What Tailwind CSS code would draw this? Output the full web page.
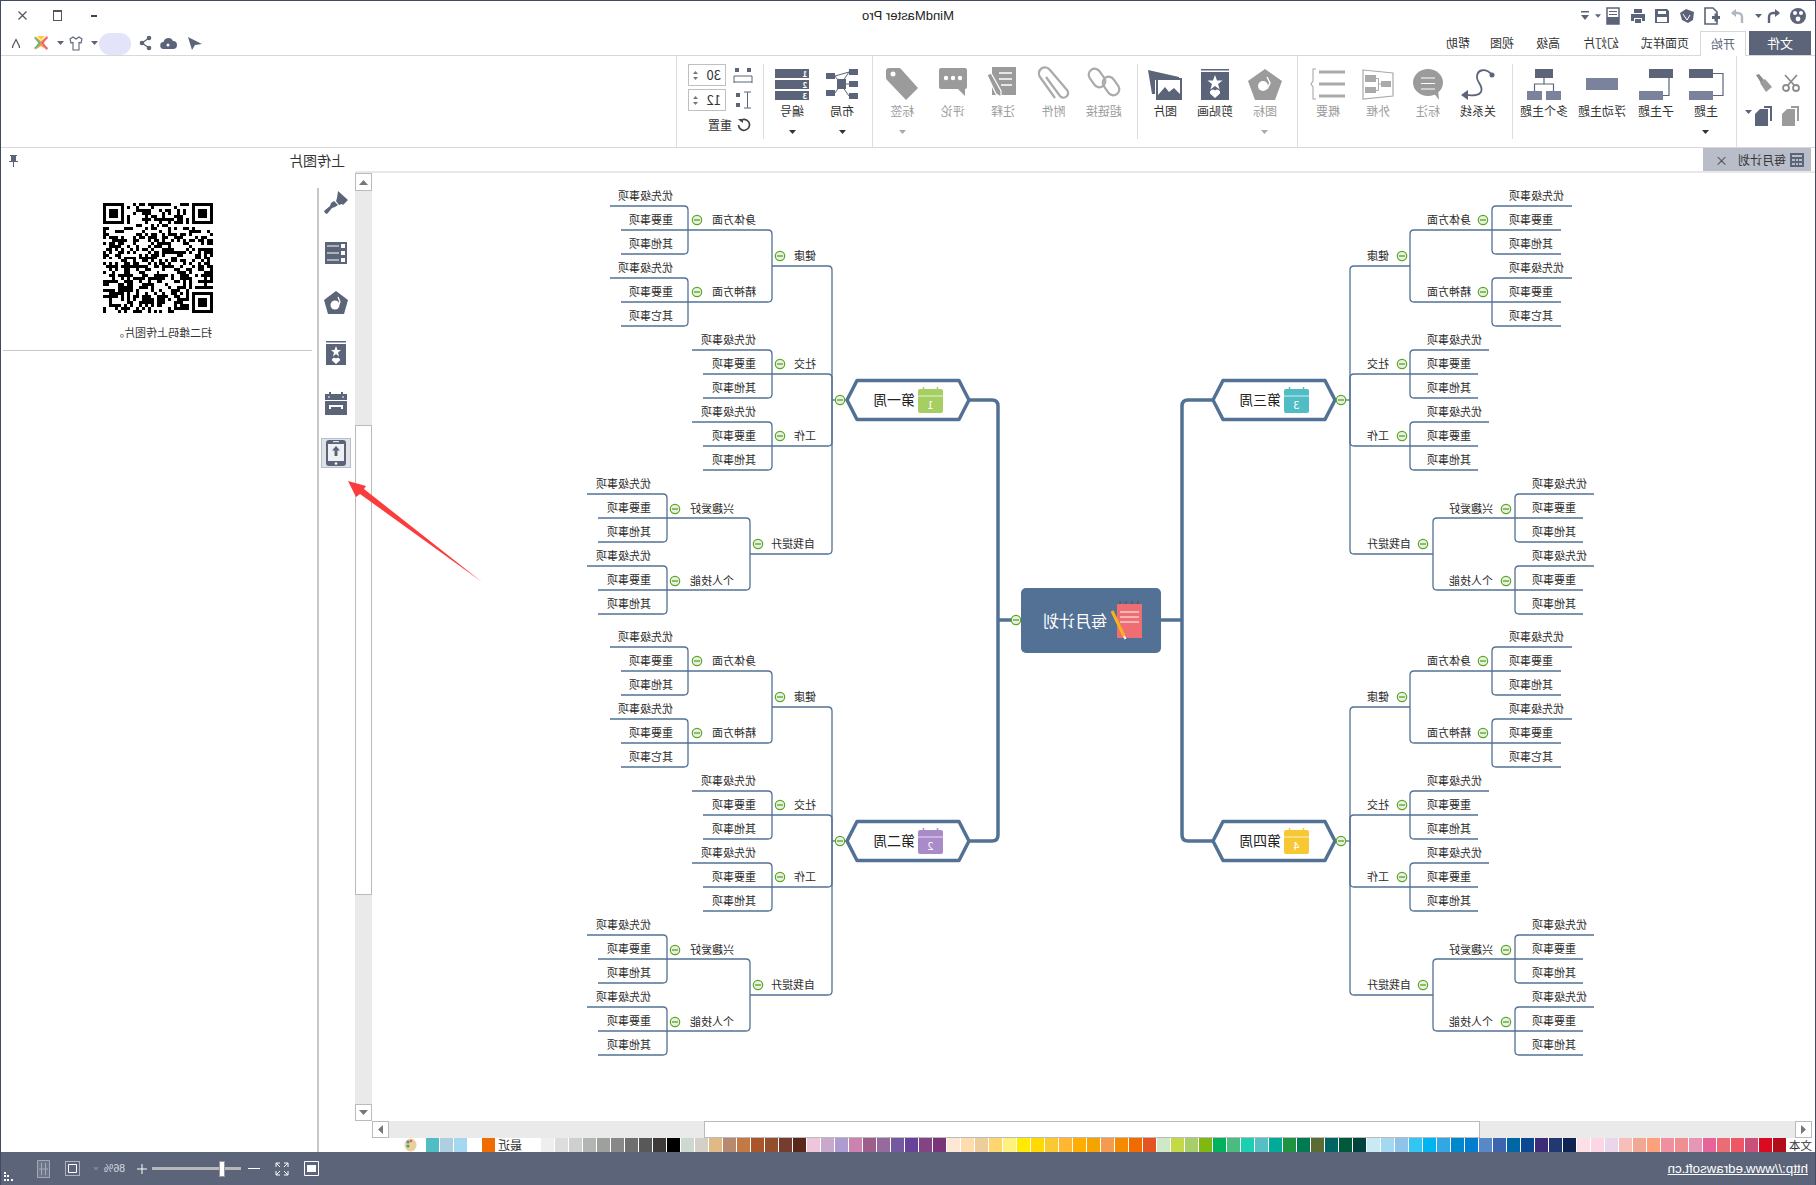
<!DOCTYPE html>
<html lang="zh">
<head>
<meta charset="utf-8">
<title>MindMaster Pro</title>
<script src="https://cdn.jsdelivr.net/npm/@tailwindcss/browser@4"></script>
</head>
<body class="bg-white">
<div class="relative w-[1816px] h-[1185px] overflow-hidden bg-white flex flex-col -scale-x-100 font-['Noto_Sans_CJK_SC',sans-serif] text-[12px] text-[#333]">

  <!-- title bar -->
  <div class="h-[31px] shrink-0 grid grid-cols-[1fr_auto_1fr] items-center">
    <div class="flex items-center pl-[10px]">
      <svg class="w-[16px] h-[16px] -scale-x-100" viewBox="0 0 16 16"><circle cx="8" cy="8" r="8" fill="#5b6478"/><circle cx="5" cy="5" r="2" fill="#fff"/><circle cx="11" cy="5" r="2" fill="#fff"/><circle cx="8" cy="11" r="2.4" fill="#fff"/></svg>
      <svg class="ml-[9px] w-[16px] h-[16px] -scale-x-100" viewBox="0 0 16 16"><path d="M4 15V9a4 4 0 0 1 4-4h6" fill="none" stroke="#5b6478" stroke-width="2.4"/><path d="M10 1l5 4-5 4z" fill="#5b6478"/></svg>
      <svg class="ml-[3px] w-[7px] h-[4px]" viewBox="0 0 7 4"><path d="M0 0h7L3.500 4z" fill="#5b6478"/></svg>
      <svg class="ml-[9px] w-[16px] h-[16px] -scale-x-100" viewBox="0 0 16 16"><path d="M12 15V9a4 4 0 0 0-4-4H2" fill="none" stroke="#b3b6c0" stroke-width="2.400"/><path d="M6 1L1 5l5 4z" fill="#b3b6c0"/></svg>
      <svg class="ml-[9px] w-[18px] h-[18px] -scale-x-100" viewBox="0 0 18 18"><path d="M2 1h8l4 4v12H2z" fill="#fff" stroke="#5b6478" stroke-width="1.600"/><path d="M9 9h8v3H9zM11.500 6.500h3v8h-3z" fill="#5b6478"/></svg>
      <svg class="ml-[8px] w-[16px] h-[16px] -scale-x-100" viewBox="0 0 16 16"><path d="M1 5l6-4 8 3-1 8-5 3-6-3z" fill="#5b6478"/><path d="M4 6l4 6 3-5" stroke="#fff" fill="none"/></svg>
      <svg class="ml-[9px] w-[16px] h-[16px] -scale-x-100" viewBox="0 0 16 16"><path d="M1 1h12l2 2v12H1z" fill="#5b6478"/><path d="M4 3h8v3H4zM3 9h10v5H3z" fill="#fff"/></svg>
      <svg class="ml-[8px] w-[16px] h-[16px] -scale-x-100" viewBox="0 0 16 16"><path d="M4 1h8v4H4zM1 6h14v7h-3v-3H4v3H1zM5 11h6v4H5z" fill="#5b6478"/></svg>
      <svg class="ml-[10px] w-[14px] h-[18px] -scale-x-100" viewBox="0 0 14 18"><path d="M1 1h12v16H1z" fill="#fff" stroke="#5b6478" stroke-width="1.500"/><path d="M1 10h12v7H1zM3 4h8v1H3zM3 7h8v1H3z" fill="#5b6478"/></svg>
      <svg class="ml-[5px] w-[6px] h-[4px]" viewBox="0 0 7 4"><path d="M0 0h7L3.500 4z" fill="#5b6478"/></svg>
      <svg class="ml-[6px] w-[8px] h-[9px]" viewBox="0 0 8 9"><path d="M0 0h8v1.500H0zM0 4h8L4 9z" fill="#5b6478"/></svg>
    </div>
    <div class="font-['Liberation_Sans',sans-serif] text-[13px] text-[#222]">MindMaster Pro</div>
    <div class="flex items-center justify-end pr-[18px]">
      <div class="w-[6px] h-[2px] bg-[#444]"></div>
      <div class="ml-[29px] w-[9px] h-[11px] border border-[#555] border-t-2"></div>
      <svg class="ml-[26px] w-[9px] h-[9px]" viewBox="0 0 9 9"><path d="M0.500 0.500l8 8M8.500 0.500l-8 8" stroke="#555" stroke-width="1.200"/></svg>
    </div>
  </div>

  <!-- ribbon tabs -->
  <div class="h-[24px] shrink-0 flex items-stretch">
    <div class="ml-[5px] w-[62px] bg-[#5b6478] text-white flex items-center justify-center text-[13px]">文件</div>
    <div class="relative z-10 ml-[3px] w-[46px] h-[25px] bg-white border border-b-0 border-[#d8d8d8] flex items-center justify-center text-[#5b6478]">开始</div>
    <div class="w-[70px] flex items-center justify-center">页面样式</div>
    <div class="w-[58px] flex items-center justify-center">幻灯片</div>
    <div class="w-[48px] flex items-center justify-center">高级</div>
    <div class="w-[44px] flex items-center justify-center">视图</div>
    <div class="w-[44px] flex items-center justify-center">帮助</div>
    <div class="ml-auto flex items-center pr-[11px]">
      <svg class="w-[16px] h-[16px] -scale-x-100" viewBox="0 0 16 16"><path d="M1 9L15 2 11 15 8 10z" fill="#5b6478" transform="matrix(-1 0 0 1 16 0)"/></svg>
      <svg class="ml-[10px] w-[17px] h-[13px] -scale-x-100" viewBox="0 0 17 13"><path d="M4 12a3.500 3.500 0 0 1-.5-7A5 5 0 0 1 13 4a4 4 0 0 1 0 8z" fill="#5b6478"/><circle cx="8" cy="8" r="1.500" fill="#fff"/></svg>
      <svg class="ml-[8px] w-[13px] h-[16px] -scale-x-100" viewBox="0 0 13 16"><path d="M10 3L3 8l7 5" fill="none" stroke="#5b6478" stroke-width="1.300"/><circle cx="10" cy="3" r="2.300" fill="#5b6478"/><circle cx="3" cy="8" r="2.300" fill="#5b6478"/><circle cx="10" cy="13" r="2.300" fill="#5b6478"/></svg>
      <div class="ml-[8px] w-[32px] h-[22px] rounded-[11px] bg-[#e3e3fa] mt-[2px]"></div>
      <svg class="ml-[1px] w-[7px] h-[4px]" viewBox="0 0 7 4"><path d="M0 0h7L3.500 4z" fill="#5b6478"/></svg>
      <svg class="ml-[8px] w-[14px] h-[15px] -scale-x-100" viewBox="0 0 14 15"><path d="M4 1L1 3l1 4 2-.5V14h6V6.500L12 7l1-4-3-2-3 2z" fill="#fff" stroke="#5b6478" stroke-width="1.100"/></svg>
      <svg class="ml-[5px] w-[7px] h-[4px]" viewBox="0 0 7 4"><path d="M0 0h7L3.500 4z" fill="#5b6478"/></svg>
      <svg class="ml-[8px] w-[16px] h-[16px] -scale-x-100" viewBox="0 0 16 16"><path d="M2 1l6 5 6-5-3 7 3 7-6-4-6 4 3-7z" fill="#f4a13a"/><path d="M1 3l5 5-5 5 1 1 6-6-6-6z" fill="#52b788"/><path d="M15 3l-5 5 5 5-1 2-6-7 6-7z" fill="#f0607a"/><path d="M4 1h8L8 5z" fill="#ffcf33"/></svg>
      <svg class="ml-[12px] w-[10px] h-[10px] -scale-x-100" viewBox="0 0 10 10"><path d="M1.500 8.500L5 1.500l3.500 7a3.500 3.500 0 0 1-7 0z" fill="none" stroke="#555" stroke-width="1.200"/></svg>
    </div>
  </div>

  <!-- ribbon -->
  <div class="h-[93px] shrink-0 border-y border-[#d8d8d8] flex items-stretch text-center">
    <!-- clipboard -->
    <div class="relative w-[80px] shrink-0 border-r border-[#dddddd] grid grid-cols-[27px_27px] auto-rows-[20px] gap-y-[13px] pl-[15px] pt-[17px]">
      <svg class="w-[20px] h-[20px] -scale-x-100" viewBox="0 0 20 20"><path d="M16 2L7 12M4 2l9 10" stroke="#8c8c8c" stroke-width="1.800"/><circle cx="5" cy="15" r="3" fill="none" stroke="#8c8c8c" stroke-width="1.800"/><circle cx="15" cy="15" r="3" fill="none" stroke="#8c8c8c" stroke-width="1.800"/></svg>
      <svg class="w-[20px] h-[20px] -scale-x-100" viewBox="0 0 20 20"><path d="M2 2l3-1 5 6-3 3z" fill="#8c8c8c"/><path d="M6 10l5-4 7 8-6 5z" fill="#9b9b9b"/></svg>
      <svg class="w-[20px] h-[20px] -scale-x-100" viewBox="0 0 20 20"><path d="M10 0h8v15h-2V2h-6z" fill="#9b9b9b"/><path d="M6 3h8v17H1V8z" fill="#9b9b9b"/></svg>
      <svg class="w-[20px] h-[20px] -scale-x-100" viewBox="0 0 20 20"><path d="M10 0h8v15h-2V2h-6z" fill="#5b6478"/><path d="M6 3h8v17H1V8z" fill="#5b6478"/></svg>
      <svg class="absolute left-[64px] top-[54px] w-[7px] h-[4px]" viewBox="0 0 7 4"><path d="M0 0h7L3.500 4z" fill="#5b6478"/></svg>
    </div>

    <div class="flex pl-[5px]">
      <div class="w-[50px] shrink-0 flex flex-col items-center pt-[8px]">
        <svg class="w-[44px] h-[36px] -scale-x-100" viewBox="0 0 44 36"><path d="M5 5h24v9H5z" fill="#5b6478"/><path d="M5 27h24v9H5z" fill="#7b829c"/><path d="M29 9.500h10v22H29" fill="none" stroke="#5b6478" stroke-width="1.200"/></svg>
        <div class="mt-[3px] leading-[16px]">主题</div>
        <svg class="mt-[11px] w-[7px] h-[4px]" viewBox="0 0 7 4"><path d="M0 0h7L3.500 4z" fill="#333"/></svg>
      </div>
      <div class="w-[50px] shrink-0 flex flex-col items-center pt-[8px]">
        <svg class="w-[44px] h-[36px] -scale-x-100" viewBox="0 0 44 36"><path d="M15 5h24v9H15z" fill="#5b6478"/><path d="M5 27h24v9H5z" fill="#7b829c"/><path d="M35 14v17.500h-6" fill="none" stroke="#5b6478" stroke-width="1.200"/></svg>
        <div class="mt-[3px] leading-[16px]">子主题</div>
      </div>
      <div class="w-[58px] shrink-0 flex flex-col items-center pt-[8px]">
        <svg class="w-[44px] h-[36px] -scale-x-100" viewBox="0 0 44 36"><path d="M6 14h32v12H6z" fill="#7b829c"/></svg>
        <div class="mt-[3px] leading-[16px]">浮动主题</div>
      </div>
      <div class="w-[58px] shrink-0 flex flex-col items-center pt-[8px]">
        <svg class="w-[44px] h-[36px] -scale-x-100" viewBox="0 0 44 36"><path d="M13 5h18v9H13z" fill="#5b6478"/><path d="M5 27h15v9H5zM24 27h15v9H24z" fill="#7b829c"/><path d="M22 14v6M12.500 27v-7h19v7" fill="none" stroke="#5b6478" stroke-width="1.200"/></svg>
        <div class="mt-[3px] leading-[16px]">多个主题</div>
      </div>
    </div>
    <div class="ml-[2px] w-px h-[75px] mt-[8px] bg-[#dddddd]"></div>

    <div class="flex ml-[9px]">
      <div class="w-[50px] shrink-0 flex flex-col items-center pt-[8px]">
        <svg class="w-[44px] h-[36px] -scale-x-100" viewBox="0 0 44 36"><circle cx="36" cy="11" r="2.500" fill="#5b6478"/><path d="M36 11C30 4 22 5 21 12c-1 6 7 10 4 16-3 5-11 3-16 3" fill="none" stroke="#5b6478" stroke-width="1.800"/><path d="M5 31l7-5v10z" fill="#5b6478"/></svg>
        <div class="mt-[3px] leading-[16px]">关系线</div>
      </div>
      <div class="w-[50px] shrink-0 flex flex-col items-center pt-[8px] text-[#9b9b9b]">
        <svg class="w-[44px] h-[36px] -scale-x-100" viewBox="0 0 44 36"><ellipse cx="22" cy="18.500" rx="15" ry="13.500" fill="#9b9b9b"/><path d="M27 28l6 8-1-10z" fill="#9b9b9b"/><path d="M15 14h14M15 19.500h14M15 25h14" stroke="#fff" stroke-width="1.200"/></svg>
        <div class="mt-[3px] leading-[16px]">标注</div>
      </div>
      <div class="w-[50px] shrink-0 flex flex-col items-center pt-[8px] text-[#9b9b9b]">
        <svg class="w-[44px] h-[36px] -scale-x-100" viewBox="0 0 44 36"><path d="M7 6l30 3v23L7 35z" fill="#fff" stroke="#aaa" stroke-width="1.200"/><path d="M9 11h11v7H9zM9 23h11v6H9zM25 17h10v6H25z" fill="#aaa"/><path d="M20 14.500h2.500v12H20M22.500 20H25" fill="none" stroke="#aaa"/></svg>
        <div class="mt-[3px] leading-[16px]">外框</div>
      </div>
      <div class="w-[50px] shrink-0 flex flex-col items-center pt-[8px] text-[#9b9b9b]">
        <svg class="w-[44px] h-[36px] -scale-x-100" viewBox="0 0 44 36"><path d="M13 6.500h26v3H13zM13 18.500h26v3H13zM13 30.500h26v3H13z" fill="#aaa"/><path d="M10 5H7v12l-2 3 2 3v12h3" fill="none" stroke="#aaa" stroke-width="1.100"/></svg>
        <div class="mt-[3px] leading-[16px]">概要</div>
      </div>
    </div>
    <div class="ml-[5px] w-px bg-[#dddddd]"></div>

    <div class="flex ml-[7px]">
      <div class="w-[50px] shrink-0 flex flex-col items-center pt-[8px] text-[#9b9b9b]">
        <svg class="w-[44px] h-[36px] -scale-x-100" viewBox="0 0 44 36"><path d="M22 5l17 12-7 19H12L5 17z" fill="#9b9b9b"/><circle cx="20" cy="22" r="5" fill="#fff"/><path d="M24 13l3 6-3 6" fill="none" stroke="#fff" stroke-width="1.500"/></svg>
        <div class="mt-[3px] leading-[16px]">图标</div>
        <svg class="mt-[11px] w-[7px] h-[4px]" viewBox="0 0 7 4"><path d="M0 0h7L3.500 4z" fill="#aaa"/></svg>
      </div>
      <div class="w-[50px] shrink-0 flex flex-col items-center pt-[8px]">
        <svg class="w-[44px] h-[36px] -scale-x-100" viewBox="0 0 44 36"><path d="M8 5h28v1.500H8zM8 8h28v28H8z" fill="#5b6478"/><path d="M22 11l2 5.500h5.500L25 20l1.700 5.500L22 22l-4.700 3.500L19 20l-4.500-3.500H20z" fill="#fff"/><path d="M22 34l-5-4.500a3 3 0 0 1 5-3 3 3 0 0 1 5 3z" fill="#fff"/></svg>
        <div class="mt-[3px] leading-[16px]">剪贴画</div>
      </div>
      <div class="w-[50px] shrink-0 flex flex-col items-center pt-[8px]">
        <svg class="w-[44px] h-[36px] -scale-x-100" viewBox="0 0 44 36"><path d="M5 6l31 7v3H12v14H9z" fill="#5b6478"/><path d="M13 14h26v22H13z" fill="#5b6478"/><path d="M15 16h22v14l-6-6-5 4-4-5-7 8z" fill="#fff"/></svg>
        <div class="mt-[3px] leading-[16px]">图片</div>
      </div>
    </div>
    <div class="ml-[2px] w-px h-[75px] mt-[8px] bg-[#dddddd]"></div>

    <div class="flex ml-[8px] text-[#9b9b9b]">
      <div class="w-[50.400px] shrink-0 flex flex-col items-center pt-[8px]">
        <svg class="w-[44px] h-[36px] -scale-x-100" viewBox="0 0 44 36"><rect x="9" y="4" width="12" height="20" rx="6" transform="rotate(-35 15 14)" fill="none" stroke="#aaa" stroke-width="2.200"/><rect x="23" y="12" width="12" height="20" rx="6" transform="rotate(-35 29 22)" fill="none" stroke="#aaa" stroke-width="2.200"/></svg>
        <div class="mt-[3px] leading-[16px]">超链接</div>
      </div>
      <div class="w-[50.400px] shrink-0 flex flex-col items-center pt-[8px]">
        <svg class="w-[44px] h-[36px] -scale-x-100" viewBox="0 0 44 36"><path d="M18 13l14 19a4.500 4.500 0 0 0 7-6L22 6a6 6 0 0 0-10 7l15 21" fill="none" stroke="#aaa" stroke-width="2.200" transform="translate(-3 0)"/></svg>
        <div class="mt-[3px] leading-[16px]">附件</div>
      </div>
      <div class="w-[50.400px] shrink-0 flex flex-col items-center pt-[8px]">
        <svg class="w-[44px] h-[36px] -scale-x-100" viewBox="0 0 44 36"><path d="M11 3h24v28H11z" fill="#9b9b9b"/><path d="M18 9h13M18 15h13M20 21h11" stroke="#fff" stroke-width="1.500"/><path d="M6 11l4-2 10 18 0 6-5-3z" fill="#9b9b9b" stroke="#fff" stroke-width="1.200"/></svg>
        <div class="mt-[3px] leading-[16px]">注释</div>
      </div>
      <div class="w-[50.400px] shrink-0 flex flex-col items-center pt-[8px]">
        <svg class="w-[44px] h-[36px] -scale-x-100" viewBox="0 0 44 36"><path d="M10 4h24a2 2 0 0 1 2 2v17a2 2 0 0 1-2 2v7l-7-7H10a2 2 0 0 1-2-2V6a2 2 0 0 1 2-2z" fill="#9b9b9b"/><circle cx="15" cy="14" r="2.200" fill="#fff"/><circle cx="22" cy="14" r="2.200" fill="#fff"/><circle cx="29" cy="14" r="2.200" fill="#fff"/></svg>
        <div class="mt-[3px] leading-[16px]">评论</div>
      </div>
      <div class="w-[50.400px] shrink-0 flex flex-col items-center pt-[8px]">
        <svg class="w-[44px] h-[36px] -scale-x-100" viewBox="0 0 44 36"><path d="M9 4h10a3 3 0 0 1 2 1l17 19-12 12L7 16a3 3 0 0 1-1-2V7a3 3 0 0 1 3-3z" fill="#9b9b9b"/><circle cx="13" cy="10" r="2.500" fill="#fff"/></svg>
        <div class="mt-[3px] leading-[16px]">标签</div>
        <svg class="mt-[11px] w-[7px] h-[4px]" viewBox="0 0 7 4"><path d="M0 0h7L3.500 4z" fill="#aaa"/></svg>
      </div>
    </div>
    <div class="ml-[4px] w-px bg-[#dddddd]"></div>

    <div class="flex ml-[5px]">
      <div class="w-[50px] shrink-0 flex flex-col items-center pt-[8px]">
        <svg class="w-[44px] h-[36px] -scale-x-100" viewBox="0 0 44 36"><path d="M17 15h9v10h-9zM6 9h9v6H6zM6 26h9v6H6zM29 5h9v6h-9zM29 17h9v6h-9zM29 29h9v6h-9z" fill="#5b6478"/><path d="M15 12l14-4M15 12l14 20M15 29L29 8M26 20h3" stroke="#5b6478" stroke-width="1"/></svg>
        <div class="mt-[3px] leading-[16px]">布局</div>
        <svg class="mt-[11px] w-[7px] h-[4px]" viewBox="0 0 7 4"><path d="M0 0h7L3.500 4z" fill="#333"/></svg>
      </div>
      <div class="w-[50px] shrink-0 flex flex-col items-center pt-[8px]">
        <svg class="w-[44px] h-[36px] -scale-x-100" viewBox="0 0 44 36"><path d="M5 5h34v9H5zM5 16h34v9H5zM5 27h34v9H5z" fill="#5b6478"/><g fill="#fff" font-size="8" font-weight="700" text-anchor="middle"><text transform="translate(35 12.500) scale(-1 1)">1</text><text transform="translate(35 23.500) scale(-1 1)">2</text><text transform="translate(35 34.500) scale(-1 1)">3</text></g></svg>
        <div class="mt-[3px] leading-[16px]">编号</div>
        <svg class="mt-[11px] w-[7px] h-[4px]" viewBox="0 0 7 4"><path d="M0 0h7L3.500 4z" fill="#333"/></svg>
      </div>
    </div>
    <div class="ml-[3px] w-px h-[75px] mt-[8px] bg-[#dddddd]"></div>

    <!-- spacing -->
    <div class="w-[86px] shrink-0 pt-[8px] pl-[7px]">
      <div class="flex items-center h-[22px]">
        <svg class="w-[26px] h-[22px] -scale-x-100" viewBox="0 0 26 22"><path d="M5 4h4v4H5zM17 4h4v4h-4z" fill="#5b6478"/><path d="M4 12h18M4 12v7M22 12v7M4 18h18" fill="none" stroke="#5b6478"/></svg>
        <div class="ml-[4px] w-[38px] h-[22px] border border-[#c0c0c0] flex items-center justify-between px-[4px] text-[13px]"><span>30</span><span class="flex flex-col gap-[3px]"><svg class="w-[5px] h-[3px]" viewBox="0 0 5 3"><path d="M0 3h5L2.500 0z" fill="#777"/></svg><svg class="w-[5px] h-[3px]" viewBox="0 0 5 3"><path d="M0 0h5L2.500 3z" fill="#777"/></svg></span></div>
      </div>
      <div class="flex items-center h-[22px] mt-[3px]">
        <svg class="w-[26px] h-[22px] -scale-x-100" viewBox="0 0 26 22"><path d="M6 4h4v4H6zM6 14h4v4H6z" fill="#5b6478"/><path d="M14 3h7M17.500 3v16M14 19h7" fill="none" stroke="#5b6478"/></svg>
        <div class="ml-[4px] w-[38px] h-[22px] border border-[#c0c0c0] flex items-center justify-between px-[4px] text-[13px]"><span>12</span><span class="flex flex-col gap-[3px]"><svg class="w-[5px] h-[3px]" viewBox="0 0 5 3"><path d="M0 3h5L2.500 0z" fill="#777"/></svg><svg class="w-[5px] h-[3px]" viewBox="0 0 5 3"><path d="M0 0h5L2.500 3z" fill="#777"/></svg></span></div>
      </div>
      <div class="flex items-center h-[16px] mt-[6px] ml-[5px] gap-[5px]">
        <svg class="w-[14px] h-[14px] -scale-x-100" viewBox="0 0 14 14"><path d="M3 3a5.500 5.500 0 1 1-1.500 4" fill="none" stroke="#444" stroke-width="1.700"/><path d="M1 1h5v4z" fill="#444" transform="translate(0 0)"/></svg>
        <span>重置</span>
      </div>
    </div>
    <div class="w-px bg-[#dddddd]"></div>
  </div>

  <!-- main -->
  <div class="h-[1004px] shrink-0 flex">
    <!-- document side -->
    <div class="w-[1461px] shrink-0 flex flex-col">
      <div class="h-[25px] shrink-0 border-b-2 border-[#e8e8e8] flex">
        <div class="ml-[5px] w-[108px] h-[23px] bg-[#b9bdc9] flex items-center pl-[6px] gap-[3px]">
          <svg class="w-[16px] h-[16px] shrink-0 -scale-x-100" viewBox="0 0 16 16"><path d="M1 1h14v14H1z" fill="#5b6478"/><path d="M3 3h10v2H3zM3 7h3v2H3zM7 7h2v2H7zM10 7h3v2h-3zM3 11h3v2H3zM7 11h2v2H7zM10 11h3v2h-3z" fill="#b9bdc9"/></svg>
          <span class="text-[12px] text-[#333] w-[48px] shrink-0 whitespace-nowrap">每月计划</span>
          <span class="ml-[7px] text-[13px] leading-none text-[#444]">×</span>
        </div>
      </div>
      <div class="h-[948px] shrink-0 flex">
        <div class="w-[1444px] shrink-0 relative">
          <svg id="map" class="block" width="1444" height="948" viewBox="0 173 1444 948"></svg>
        </div>
        <!-- vertical scrollbar -->
        <div class="w-[17px] shrink-0 flex flex-col bg-[#eaeaea]">
          <div class="h-[18px] bg-white border border-[#bbbbbb] flex items-center justify-center"><svg class="w-[9px] h-[5px]" viewBox="0 0 9 5"><path d="M0 5h9L4.500 0z" fill="#777"/></svg></div>
          <div class="h-[234px]"></div>
          <div class="h-[470px] bg-white border-x border-t border-b border-[#bbbbbb]"></div>
          <div class="flex-1"></div>
          <div class="h-[17px] bg-white border border-[#bbbbbb] flex items-center justify-center"><svg class="w-[9px] h-[5px]" viewBox="0 0 9 5"><path d="M0 0h9L4.500 5z" fill="#777"/></svg></div>
        </div>
      </div>
      <!-- horizontal scrollbar -->
      <div class="h-[17px] w-[1444px] shrink-0 flex pl-[4px]">
        <div class="w-[17px] bg-white border border-[#bbbbbb] flex items-center justify-center"><svg class="w-[5px] h-[9px]" viewBox="0 0 5 9"><path d="M5 0v9L0 4.500z" fill="#777"/></svg></div>
        <div class="w-[315px] bg-[#eaeaea]"></div>
        <div class="w-[776px] bg-white border border-[#bbbbbb]"></div>
        <div class="flex-1 bg-[#eaeaea]"></div>
        <div class="w-[17px] bg-white border border-[#bbbbbb] flex items-center justify-center"><svg class="w-[5px] h-[9px]" viewBox="0 0 5 9"><path d="M0 0v9L5 4.500z" fill="#777"/></svg></div>
      </div>
      <!-- colour strip -->
      <div class="h-[14px] shrink-0 flex items-stretch leading-[14px] text-[11.500px]">
        <div class="w-[30px] pl-[4px] whitespace-nowrap">文本</div>
        <div id="sw" class="flex"></div>
        <div class="ml-[18px] w-[27px] whitespace-nowrap text-[12px]">最近</div>
        <div class="w-[13px] bg-[#f06c00]"></div>
        <div class="w-[15px]"></div>
        <div class="w-[13px] mr-px bg-[#a3d8f0]"></div>
        <div class="w-[13px] mr-px bg-[#aecfe0]"></div>
        <div class="w-[13px] bg-[#4fbdc3]"></div>
        <svg class="ml-[9px] w-[13px] h-[14px] -scale-x-100" viewBox="0 0 13 14"><ellipse cx="6.500" cy="7" rx="6" ry="6.500" fill="#e9cf9a"/><circle cx="4" cy="4" r="1.500" fill="#4a86c8"/><circle cx="4" cy="8" r="1.500" fill="#3fa66b"/><circle cx="7" cy="3" r="1.300" fill="#e0624a"/></svg>
      </div>
    </div>

    <!-- side panel -->
    <div class="w-[355px] shrink-0 flex flex-col">
      <div class="h-[25px] shrink-0 flex items-center pl-[10px] pr-[9px] justify-between">
        <span class="text-[14px] text-[#333]">上传图片</span>
        <svg class="w-[9px] h-[12px] -scale-x-100" viewBox="0 0 9 12"><path d="M1 0h7v1H7v5h2v1H5v5H4V7H0V6h2V1H1z" fill="#5b6478"/></svg>
      </div>
      <div class="flex-1 flex">
        <div class="w-[36px] shrink-0 pt-[5px] pl-[2px] flex flex-col">
          <div class="h-[50px] flex items-center justify-center"><svg class="w-[26px] h-[26px] -scale-x-100" viewBox="0 0 26 26"><path d="M15 1l10 9-5 5-1-1-3 1-3-4 1-3z" fill="#5b6478"/><path d="M11 11l4 4-3 2-3 1-5 6-2-1-1-2 6-5 1-3z" fill="#5b6478"/></svg></div>
          <div class="h-[50px] flex items-center justify-center"><svg class="w-[22px] h-[22px] -scale-x-100" viewBox="0 0 22 22"><path d="M0 0h22v22H0z" fill="#5b6478"/><path d="M2 4h12M2 11h12M2 18h12" stroke="#fff"/><path d="M16 2h4v4h-4zM16 9h4v4h-4zM16 16h4v4h-4z" fill="#fff"/></svg></div>
          <div class="h-[50px] flex items-center justify-center"><svg class="w-[24px] h-[24px] -scale-x-100" viewBox="0 0 24 24"><path d="M12 0l12 9-4 14H4L0 9z" fill="#5b6478"/><circle cx="11" cy="14" r="4.500" fill="#fff"/><path d="M14 6l2 5-2 4" fill="none" stroke="#fff" stroke-width="1.300"/></svg></div>
          <div class="h-[50px] flex items-center justify-center"><svg class="w-[20px] h-[24px] -scale-x-100" viewBox="0 0 20 24"><path d="M0 0h20v1.500H0zM0 3h20v21H0z" fill="#5b6478"/><path d="M10 5l1.500 4H15l-3 2.500 1 4-3-2.500-3 2.500 1-4-3-2.500h3.500z" fill="#fff"/><path d="M10 23l-4-3.500a2.300 2.300 0 0 1 4-2 2.300 2.300 0 0 1 4 2z" fill="#fff"/></svg></div>
          <div class="h-[50px] flex items-center justify-center"><svg class="w-[22px] h-[23px] -scale-x-100" viewBox="0 0 22 23"><path d="M4 0h2v2h10V0h2v2h4v21H0V2h4z" fill="#5b6478"/><path d="M3 5h2M17 5h2M0 8.500h22" stroke="#fff" fill="none"/><path d="M4 13h14v4h-2v-2H6v2H4z" fill="#fff"/></svg></div>
          <div class="h-[50px] flex items-center justify-center"><div class="w-[30px] h-[30px] bg-[#e0e2e8] border border-[#b9bdc9] flex items-center justify-center"><svg class="w-[20px] h-[26px] -scale-x-100" viewBox="0 0 20 26"><rect width="20" height="26" rx="3" fill="#5b6478"/><rect x="2" y="4" width="16" height="17" fill="#eef0f4"/><path d="M7 1.700h6" stroke="#fff"/><circle cx="10" cy="23.500" r="1.300" fill="#fff"/><path d="M10 6l4 4.500h-2.500V16h-3v-5.500H6z" fill="#5b6478"/></svg></div></div>
        </div>
        <div class="w-[2px] mt-[15px] bg-[#c8c8c8] shrink-0"></div>
        <div class="flex-1 pt-[30px]">
          <svg id="qr" class="ml-[104px] w-[110px] h-[110px] -scale-x-100" viewBox="0 0 37 37" shape-rendering="crispEdges"></svg>
          <div class="ml-[105px] mt-[11px] leading-[16px] text-[11px] text-[#333] whitespace-nowrap">扫二维码上传图片。</div>
          <div class="ml-[5px] mt-[10px] w-[309px] h-[1px] bg-[#c8c8c8]"></div>
        </div>
      </div>
    </div>
  </div>

  <!-- status bar -->
  <div class="h-[33px] shrink-0 bg-[#5b6478] flex items-center text-white">
    <a class="ml-[8px] underline font-['Liberation_Sans',sans-serif] text-[13.300px]">http://www.edrawsoft.cn</a>
    <div class="ml-auto pr-[4px] flex items-center">
      <svg class="w-[15px] h-[15px]" viewBox="0 0 15 15"><path d="M0.500 0.500h14v14H0.500z" fill="none" stroke="#fff"/><path d="M3 4h9v7H3z" fill="#fff"/></svg>
      <svg class="ml-[15px] w-[14px] h-[14px]" viewBox="0 0 14 14"><path d="M1 5V1h4M13 5V1H9M1 9v4h4M13 9v4H9M1 1l4 4M13 1L9 5M1 13l4-4M13 13L9 9" fill="none" stroke="#fff"/></svg>
      <div class="ml-[15px] w-[12px] h-px bg-white"></div>
      <div class="ml-[7px] relative w-[89px] h-[3px] bg-[#b8b8b8]"><div class="absolute left-[16px] -top-[6px] w-[6px] h-[16px] bg-white border border-[#999]"></div></div>
      <svg class="ml-[5px] w-[10px] h-[10px]" viewBox="0 0 10 10"><path d="M0 5h10M5 0v10" stroke="#fff"/></svg>
      <span class="ml-[12px] w-[18px] text-[10.500px] text-[#d8dbe2] font-['Liberation_Sans',sans-serif]">86%</span>
      <svg class="ml-[8px] w-[6px] h-[4px]" viewBox="0 0 7 4"><path d="M0 0h7L3.500 4z" fill="#7d8498"/></svg>
      <svg class="ml-[13px] w-[15px] h-[15px]" viewBox="0 0 15 15"><path d="M0.500 0.500h14v14H0.500z" fill="none" stroke="#fff" stroke-dasharray="1 1"/><path d="M3.500 3.500h8v8h-8z" fill="none" stroke="#fff"/></svg>
      <svg class="ml-[15px] w-[13px] h-[18px]" viewBox="0 0 13 18"><path d="M0.500 0.500h12v17H0.500z" fill="#6f7689" stroke="#a4a9b6"/><path d="M4.500 3v12M8.500 3v12M2 9h9" stroke="#a4a9b6"/></svg>
      <svg class="ml-[24px] w-[9px] h-[10px] mt-[16px] -scale-x-100" viewBox="0 0 9 10"><path d="M0 0h2v2H0zM3 3h2v2H3zM0 3h2v2H0zM7 7h2v2H7zM3 7h2v2H3zM0 7h2v2H0z" fill="#fff"/></svg>
    </div>
  </div>

  <!-- red annotation arrow, lies over the screenshot -->
  <svg class="absolute inset-0 w-[1816px] h-[1185px] -scale-x-100 pointer-events-none" viewBox="0 0 1816 1185"><path d="M348 481L366 486 364 489 482 582 360 494 356 497z" fill="#fb3c3c"/></svg>
  <!-- window frame -->
  <div class="absolute inset-0 border-t border-x border-[#414a60] pointer-events-none"></div>
</div>

<script>
// colour strip (listed as the strip reads on screen, right to left here)
var cols="#eeeeee,#dddddd,#cdd0ce,#b3b5b3,#9ea09e,#888888,#6f6f6f,#585858,#3f3a3a,#000000,#ccd8d0,#d5cfc8,#e1b985,#b58a6e,#c27a42,#a8562a,#934f2b,#763c30,#5a271a,#eec5da,#c8a9cb,#ae9bd2,#cb82b0,#9c5f8c,#966a9d,#7459a0,#664398,#844383,#7a3578,#fde8d5,#fedcaf,#edce9b,#fed56f,#fef17e,#ffea00,#ffd900,#fac92f,#ffb733,#ffad00,#f4a400,#f59b4f,#f48a00,#f06c00,#e35422,#cfe8c8,#c3d945,#a6cf6b,#80b812,#00b25c,#4abc80,#1cceb2,#55bfc4,#00ac99,#1e9440,#007a50,#5a6c32,#006462,#00593a,#01413e,#c9e9f5,#a4d8f0,#8ec3ea,#33c6f5,#00b4f0,#31a7e3,#0088cd,#007cd0,#5788c7,#3f64af,#0066a4,#0a4892,#3e2c79,#223872,#0e2452,#fde0e6,#fdd6e5,#ead6ea,#f6bfba,#f0a894,#fda17a,#f08fa0,#ef8f8f,#e498b5,#e76399,#ea6d75,#ee5565,#c95078,#d80b21,#b20c1d".split(",").reverse();
document.getElementById('sw').innerHTML=cols.map(function(c){return '<div style="width:13px;margin-right:1px;background:'+c+'"></div>'}).join('');

// QR code
(function(){
  var n=37,s=2463534242,g=[],o='';
  function r(){s^=s<<13;s^=s>>>17;s^=s<<5;s=s>>>0;return (s>>>7)&1}
  for(var i=0;i<50;i++)r();
  for(var y=0;y<n;y++){g[y]=[];for(var x=0;x<n;x++)g[y][x]=r()}
  function f(a,b){for(var y=-1;y<8;y++)for(var x=-1;x<8;x++){var X=a+x,Y=b+y;if(X<0||Y<0||X>=n||Y>=n)continue;
    var on=x>=0&&x<7&&y>=0&&y<7&&(x==0||x==6||y==0||y==6||(x>=2&&x<=4&&y>=2&&y<=4));g[Y][X]=on?1:0}}
  f(0,0);f(30,0);f(30,30);
  for(var y=0;y<n;y++)for(var x=0;x<n;x++)if(g[y][x])o+='M'+x+' '+y+'h1v1h-1z';
  document.getElementById('qr').innerHTML='<path d="'+o+'" fill="#000"/>';
})();

// mind map: geometry is read off the screen, where x grows the other way
(function(){
  var L='',T='',C='#527194';
  function path(d,w){L+='<path d="'+d+'" fill="none" stroke="'+C+'" stroke-width="'+w+'"/>'}
  function btn(x,y){L+='<circle cx="'+x+'" cy="'+y+'" r="4.700" fill="#e9efe4" stroke="#5aa81e" stroke-width="1.200"/><path d="M'+(x-3)+' '+y+'h6" stroke="#4e9a1a" stroke-width="1.200"/>'}
  function txt(x,y,t,anc,size,fill){T+='<text x="'+(1816-x)+'" y="'+(y-1)+'" text-anchor="'+anc+'" dominant-baseline="central" font-size="'+(size||11)+'" fill="'+(fill||'#2b2b2b')+'">'+t+'</text>'}
  function br(xt,yc,y,xe,w,r){
    w=w||1.300;r=r||4;var d=xe>xt?1:-1;
    if(y===yc){path('M'+xt+' '+y+'H'+xe,w);return}
    var s=y<yc?1:-1;
    path('M'+xt+' '+yc+'V'+(y+s*r)+'Q'+xt+' '+y+' '+(xt+d*r)+' '+y+'H'+xe,w);
  }
  function leaves(xt,u,lng,sht,tx,anc,third){
    br(xt,u,u-24,lng);br(xt,u,u,sht);br(xt,u,u+24,sht);
    txt(tx,u-34,'优先级事项',anc);txt(tx,u-10,'重要事项',anc);txt(tx,u+14,third||'其他事项',anc);
  }
  function quad(cy,S,name,num,col){
    var a=S.anc;
    var tipOuter=S.tip;
    // stem
    path('M'+tipOuter+' '+cy+'H'+S.trunk,1.300);
    // L1 branches
    [[-134,'健康'],[-26,'社交'],[46,'工作']].forEach(function(b){
      var u=cy+b[0];br(S.trunk,cy,u,S.a);txt(S.aT,u-10,b[1],a);btn(S.aB,u-10);
    });
    var hu=cy-134;
    [[-170,'身体方面','其他事项'],[-98,'精神方面','其它事项']].forEach(function(b){
      var u=cy+b[0];br(S.a,hu,u,S.b);txt(S.bT,u-10,b[1],a);btn(S.bB,u-10);
      leaves(S.b,u,S.bL,S.bS,S.bX,a,b[2]);
    });
    leaves(S.a,cy-26,S.cL,S.cS,S.bT,a);
    leaves(S.a,cy+46,S.cL,S.cS,S.bT,a);
    var su=cy+154;
    br(S.trunk,cy,su,S.e);txt(S.eT,su-10,'自我提升',a);btn(S.eB,su-10);
    [[118,'兴趣爱好'],[190,'个人技能']].forEach(function(b){
      var u=cy+b[0];br(S.e,su,u,S.f);txt(S.fT,u-9,b[1],a);btn(S.fB,u-9);
      leaves(S.f,u,S.fL,S.fS,S.fX,a);
    });
    // hexagon
    var xl=S.hex,xr=S.hex+122;
    L+='<path d="M'+xl+' '+cy+'L'+(xl+10)+' '+(cy-19.500)+'H'+(xr-10)+'L'+xr+' '+cy+'L'+(xr-10)+' '+(cy+19.500)+'H'+(xl+10)+'Z" fill="#fff" stroke="'+C+'" stroke-width="3.500" stroke-linejoin="round"/>';
    btn(S.b0,cy);
    // calendar
    var ix=xl+71,iy=cy-13;
    L+='<rect x="'+ix+'" y="'+(iy+2)+'" width="25" height="24" rx="2" fill="'+col+'"/><path d="M'+ix+' '+(iy+9)+'h25" stroke="#fff" stroke-opacity=".75"/><path d="M'+(ix+5.500)+' '+iy+'v5M'+(ix+19.500)+' '+iy+'v5" stroke="'+col+'" stroke-width="1.500"/>';
    txt(ix+12.500,iy+18,num,'middle',11,'#fff');
    txt(ix-3,cy,name,'start',14,'#222');
  }
  var LF={anc:'start',trunk:832,tip:846,b0:840,hex:847,a:772,aT:816,aB:780,b:688,bT:756,bB:697,bL:610,bS:621,bX:673,cL:692,cS:703,e:750,eT:815,eB:758,f:667,fT:734,fB:675,fL:587,fS:598,fX:651};
  var RG={anc:'end',trunk:1350,tip:1336,b0:1341,hex:1213,a:1410,aT:1367,aB:1402,b:1492,bT:1427,bB:1483,bL:1572,bS:1561,bX:1509,cL:1489,cS:1478,e:1433,eT:1367,eB:1423,f:1515,fT:1449,fB:1506,fL:1594,fS:1583,fX:1532};

  // trunks from the central topic
  [[998,969],[1182,1212]].forEach(function(p){
    var t=p[0],h=p[1],d=h>t?1:-1;
    path('M'+t+' 620V406Q'+t+' 400 '+(t+d*6)+' 400H'+h,3.500);
    path('M'+t+' 620V835Q'+t+' 841 '+(t+d*6)+' 841H'+h,3.500);
  });
  path('M1161 620H1182',3.500);path('M1021 620H998',3.500);

  quad(400,LF,'第一周','1','#a5cf62');
  quad(841,LF,'第二周','2','#a98bc9');
  quad(400,RG,'第三周','3','#4fbdc3');
  quad(841,RG,'第四周','4','#f8c833');

  // central topic
  L+='<rect x="1021" y="588" width="140" height="65" rx="5" fill="'+C+'"/>';
  L+='<path d="M1117 604h25v34h-25z" fill="#ee6e73"/><path d="M1120 604v-3M1126 604v-3M1132 604v-3M1138 604v-3" stroke="#555" stroke-width="1.200"/><path d="M1120 612h19M1120 617h19M1120 622h19" stroke="#fff"/>';
  L+='<path d="M1112 611L1124 636" stroke="#f7b21c" stroke-width="3"/><path d="M1124 636l1.500 3" stroke="#fff" stroke-width="2"/>';
  btn(1016,620);
  txt(1107,621,'每月计划','start',16,'#fff');

  document.getElementById('map').innerHTML='<g transform="translate(1816 0) scale(-1 1)">'+L+'</g>'+T;
})();
</script>
</body>
</html>
